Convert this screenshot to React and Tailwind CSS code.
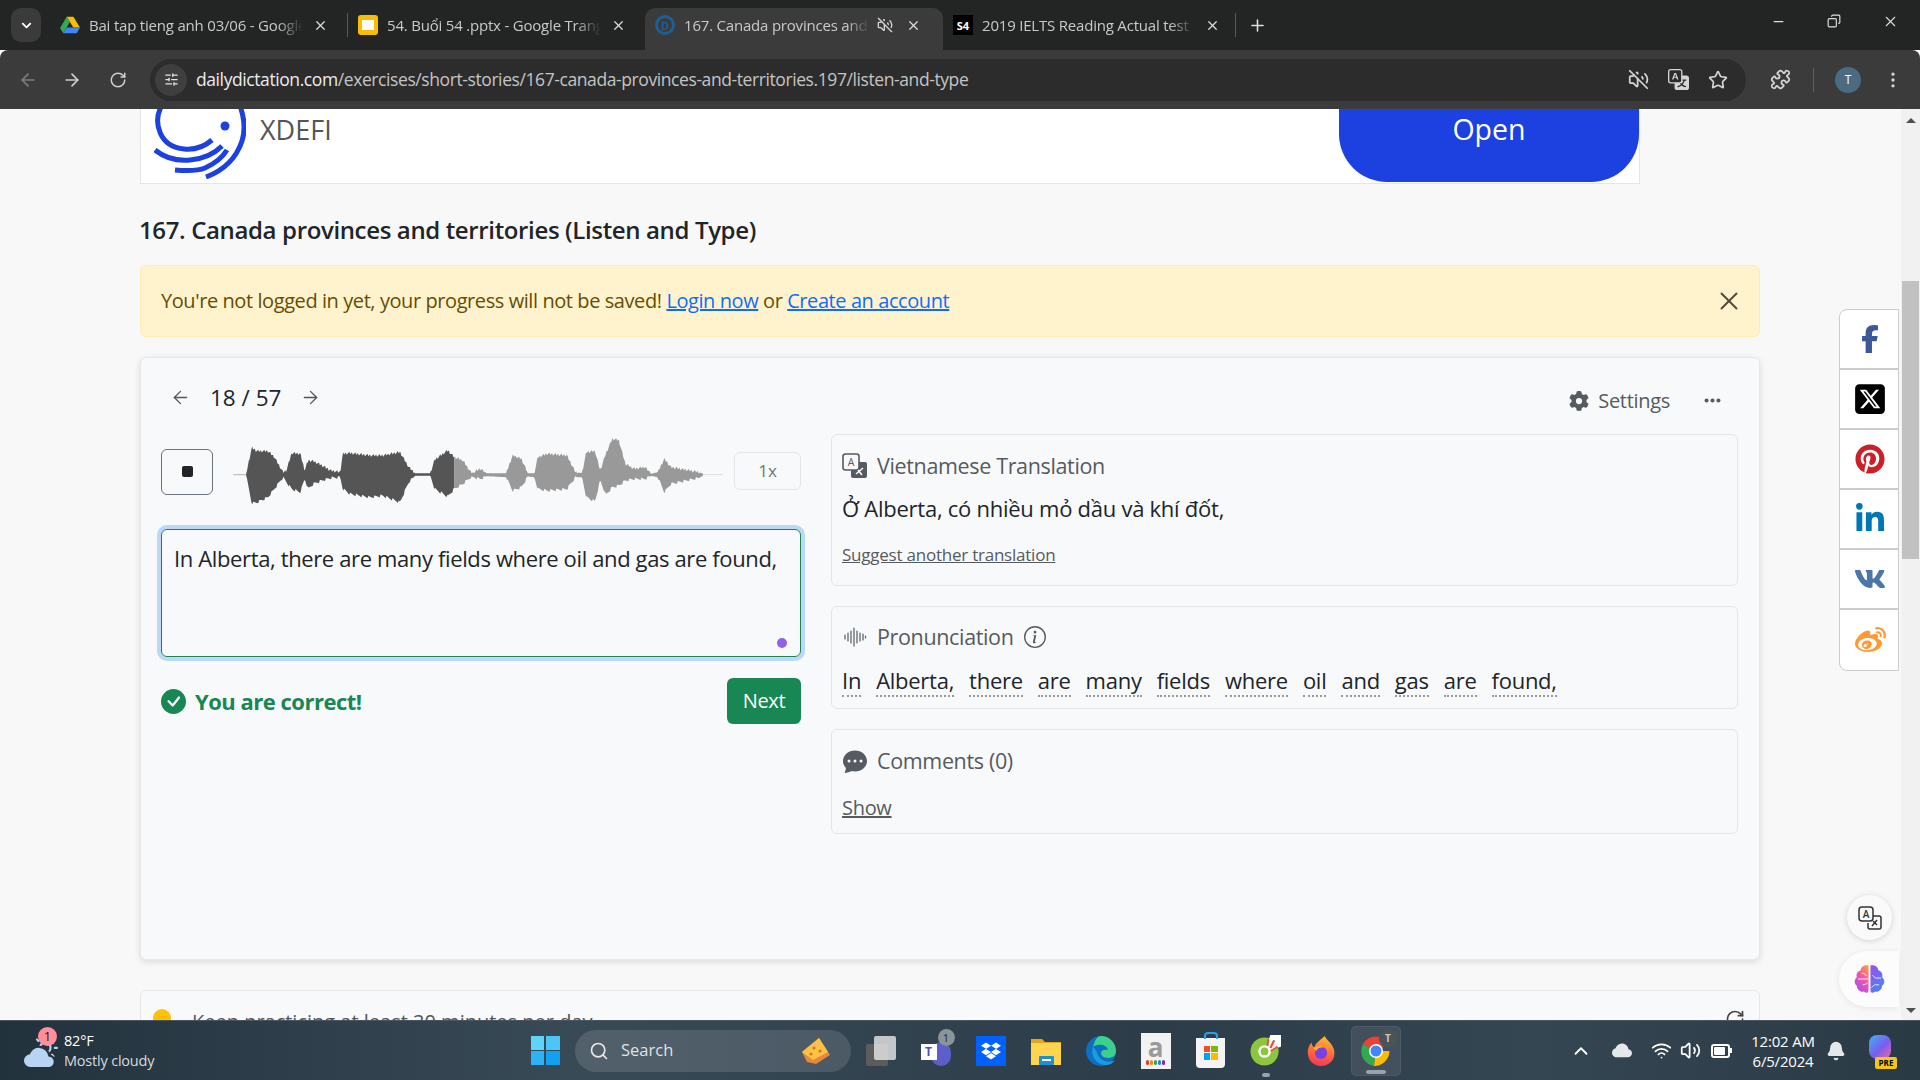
import { ArrowLeft, ArrowRight, RotateCw, X, Plus, Minus, Search, Star, VolumeOff, Puzzle, EllipsisVertical, ChevronDown, ChevronUp, Wifi, Volume2, Bell, SlidersHorizontal, Copy, RotateCcw } from 'lucide-react';
import { FaFacebookF, FaPinterest, FaLinkedinIn, FaWeibo, FaSquareXTwitter, FaGear, FaEllipsis, FaDropbox } from 'react-icons/fa6';
import { FaVk } from 'react-icons/fa';
import { BsCheckCircleFill, BsChatDotsFill, BsInfoCircle, BsCloudFill, BsCloudSunFill, BsTranslate } from 'react-icons/bs';

const font = "font-['Open_Sans','Noto_Sans',sans-serif]";

// zoom-space envelope of the waveform: x, top, bottom
const envelope = [
  [245, 300, 306], [258, 222, 388], [270, 232, 385], [295, 232, 370], [310, 250, 345], [330, 295, 310], [338, 290, 325],
  [350, 238, 345], [370, 240, 355], [380, 290, 315], [388, 260, 345], [400, 262, 330], [420, 275, 320], [440, 290, 312],
  [462, 295, 310], [468, 240, 345], [485, 238, 360], [530, 245, 370], [560, 245, 365], [600, 235, 385], [620, 280, 325],
  [635, 298, 306], [670, 298, 306], [680, 258, 345], [710, 230, 368], [725, 250, 345], [745, 260, 330], [765, 298, 308],
  [785, 285, 315], [800, 298, 307], [845, 298, 310], [860, 245, 350], [880, 255, 340], [895, 298, 308], [910, 298, 310],
  [918, 250, 345], [940, 240, 350], [985, 245, 345], [1005, 295, 310], [1020, 298, 310], [1030, 235, 370], [1050, 232, 382],
  [1062, 290, 320], [1075, 240, 362], [1090, 195, 340], [1105, 200, 335], [1120, 270, 320], [1140, 285, 315], [1165, 280, 315],
  [1180, 300, 306], [1195, 295, 310], [1210, 255, 355], [1225, 280, 330], [1260, 288, 320], [1290, 295, 312], [1300, 300, 305],
];

function wavePoints(from, to) {
  const top = [];
  const bottom = [];
  for (let x = from; x <= to; x += 2) {
    const i = envelope.findIndex((p) => p[0] >= x);
    const b = envelope[i] || envelope[envelope.length - 1];
    const a = envelope[Math.max(i - 1, 0)];
    const f = b[0] === a[0] ? 0 : (x - a[0]) / (b[0] - a[0]);
    const t = a[1] + (b[1] - a[1]) * f;
    const d = a[2] + (b[2] - a[2]) * f;
    const big = d - t > 14;
    top.push(`${x},${t + (big ? (((x * 13) % 7) - 3) * 1.4 : 0)}`);
    bottom.unshift(`${x},${d - (big ? (((x * 17) % 7) - 3) * 1.4 : 0)}`);
  }
  return [...top, ...bottom].join(' ');
}

function Waveform() {
  return (
    <svg viewBox="210 190 1140 200" preserveAspectRatio="none" className="w-[494px] h-[67px] shrink-0">
      <rect x="215" y="301" width="510" height="3" fill="#b5b5b5" />
      <rect x="725" y="301" width="620" height="3" fill="#dddddd" />
      <polygon points={wavePoints(245, 725)} fill="#555555" />
      <polygon points={wavePoints(725, 1300)} fill="#999999" />
    </svg>
  );
}

function DriveIcon() {
  return (
    <svg viewBox="0 0 24 22" className="w-5 h-5 shrink-0">
      <path d="M8 1h8l8 13h-8z" fill="#fbbc04" />
      <path d="M8 1 0 15l4 6 8-14z" fill="#34a853" />
      <path d="M4 21h16l4-7H8z" fill="#4285f4" />
    </svg>
  );
}

function TabFrame({ icon, title, active, extra, width, pad, sep = true }) {
  return (
    <div className="flex items-center">
      <div className={`flex items-center h-[42px] ${width} pl-[10px] ${pad} pb-[8px] ${active ? 'bg-[#3b3b3b] rounded-t-[10px]' : ''}`}>
        {icon}
        <span className="ml-[9px] flex-1 min-w-0 overflow-hidden whitespace-nowrap text-[15px] tracking-[-0.2px] text-[#c9c9c9] [mask-image:linear-gradient(to_right,black_88%,transparent)]">{title}</span>
        {extra}
        <X size={15} className="ml-[10px] text-[#dcdcdc] shrink-0" />
      </div>
      {sep && <div className="w-px h-[24px] mb-[8px] bg-[#5a5a5a]" />}
    </div>
  );
}

function TabStrip() {
  return (
    <div className="h-[50px] bg-[#232525] flex items-end shrink-0 pl-[11px]">
      <div className="w-[30px] h-[34px] bg-[#3b3b3b] rounded-[10px] flex items-center justify-center mb-[8px]">
        <ChevronDown size={15} className="text-white" strokeWidth={3} />
      </div>
      <div className="ml-[9px] flex items-center">
        <TabFrame width="w-[297px]" pad="pr-[19px]" title="Bai tap tieng anh 03/06 - Google Drive" icon={<DriveIcon />} />
        <TabFrame width="w-[297px]" pad="pr-[19px]" sep={false} title="54. Buổi 54 .pptx - Google Trang tính" icon={
          <div className="w-5 h-5 rounded-[3px] bg-[#fbbc04] flex items-center justify-center shrink-0"><div className="w-3 h-[10px] bg-white" /></div>
        } />
        <TabFrame width="w-[298px]" pad="pr-[22px]" active sep={false} title="167. Canada provinces and territories" extra={<VolumeOff size={16} className="ml-[8px] mr-[3px] text-[#d5d5d5] shrink-0" />} icon={
          <div className="w-5 h-5 rounded-full border-[3px] border-[#1c5f96] flex items-center justify-center text-[11px] font-bold text-[#1c5f96] leading-none shrink-0">D</div>
        } />
        <TabFrame width="w-[292px]" pad="pr-[15px]" title="2019 IELTS Reading Actual test 3" icon={
          <div className="w-5 h-5 bg-black flex items-center justify-center text-[11px] font-bold text-white leading-none shrink-0">S4</div>
        } />
        <Plus size={19} className="ml-[12px] mb-[8px] text-[#e0e0e0]" />
      </div>
      <div className="ml-auto flex items-center h-[42px] mb-[8px] pr-[21px] gap-[41px] text-[#dedede]">
        <Minus size={15} />
        <Copy size={14} className="-scale-x-100" />
        <X size={17} strokeWidth={1.5} />
      </div>
    </div>
  );
}

function Toolbar() {
  return (
    <div className="h-[59px] bg-[#3b3b3b] flex items-center shrink-0 rounded-t-[8px] pl-[18px] pr-[17px]">
      <ArrowLeft size={20} className="text-[#7d7d7d]" />
      <ArrowRight size={20} className="ml-[24px] text-[#cfcfcf]" />
      <RotateCw size={18} className="ml-[27px] text-[#cfcfcf]" />
      <div className="ml-[23px] flex-1 h-[42px] bg-[#2c2c2c] rounded-full flex items-center pl-[5px] pr-[18px]">
        <div className="w-8 h-8 rounded-full bg-[#3f3f3f] flex items-center justify-center">
          <SlidersHorizontal size={15} className="text-[#e3e3e3]" />
        </div>
        <div className="ml-[9px] text-[17.5px] tracking-[-0.41px] whitespace-nowrap text-[#c4c4c4]">
          <span className="text-[#ececec]">dailydictation.com</span>/exercises/short-stories/167-canada-provinces-and-territories.197/listen-and-type
        </div>
        <div className="ml-auto flex items-center gap-[19px] text-[#d5d5d5]">
          <VolumeOff size={21} />
          <BsTranslate size={21} />
          <Star size={20} />
        </div>
      </div>
      <Puzzle size={21} className="ml-[24px] text-[#d5d5d5]" />
      <div className="ml-[22px] w-px h-[24px] bg-[#5f5f5f]" />
      <div className="ml-[21px] w-[26px] h-[26px] rounded-full bg-[#4b6b82] text-white text-[12px] flex items-center justify-center">T</div>
      <EllipsisVertical size={20} className="ml-[22px] text-[#d5d5d5]" />
    </div>
  );
}

function AdLogo() {
  return (
    <svg viewBox="0 0 92 92" className="w-[92px] h-[92px] shrink-0 -mt-[22px]" fill="none" stroke="#1d40e0" strokeWidth="5" strokeLinecap="butt">
      <path d="M8 18C-2 36 6 60 30 62 40 63 50 60 58 53" />
      <path d="M1 63C12 72 24 74 36 73 48 72 60 67 68 59" />
      <path d="M21 83C34 84 44 84 51 81 60 77 68 71 73 63" />
      <path d="M83 12C90 26 92 42 88 54 82 72 68 84 52 90" />
      <circle cx="71" cy="39" r="4.500" fill="#1d40e0" stroke="none" />
    </svg>
  );
}

function Ad() {
  return (
    <div className="w-[1500px] h-[75px] bg-white border border-t-0 border-[#e5e5e5] flex items-start pl-[13px] overflow-hidden">
      <AdLogo />
      <span className="ml-[14px] mt-[3px] text-[27px] leading-[36px] text-[#555]">XDEFI</span>
      <div className="ml-auto w-[300px] h-[73px] bg-[#1d40e0] rounded-b-[48px] flex items-center justify-center text-white text-[28.5px] font-medium pb-[32px]">Open</div>
    </div>
  );
}

function SectionTitle({ icon, children, extra }) {
  return (
    <div className="flex items-center text-[#555b61] text-[21.5px] leading-[30px] tracking-[-0.35px]">
      <span className="w-[27px] flex justify-center shrink-0 -ml-[1px]">{icon}</span>
      <span className="ml-[9px]">{children}</span>
      {extra}
    </div>
  );
}

function TranslateIcon() {
  return (
    <svg viewBox="0 0 26 26" className="w-[26px] h-[26px]">
      <rect x="9" y="9" width="16" height="16" rx="2" fill="#555b61" />
      <rect x="1" y="1" width="16" height="16" rx="2.5" fill="#f8f9fa" stroke="#555b61" strokeWidth="1.6" />
      <text x="9" y="13" textAnchor="middle" fontSize="10.5" fontFamily="Open Sans" fill="#555b61">A</text>
      <path d="M14 21l7-6M16 17l4 5" stroke="#f8f9fa" strokeWidth="1.6" />
    </svg>
  );
}

function SoundIcon() {
  return (
    <svg viewBox="0 0 24 24" className="w-6 h-6" stroke="#555b61" strokeWidth="1.2" strokeLinecap="round">
      <path d="M2 10v4M5 8v8M8 6v12M11 3v18M14 6v12M17 8v8M20 9v6M22.5 11v2" />
    </svg>
  );
}

const words = ['In', 'Alberta,', 'there', 'are', 'many', 'fields', 'where', 'oil', 'and', 'gas', 'are', 'found,'];

function RightPanels() {
  return (
    <div className="w-[908px] flex flex-col gap-[20px]">
      <div className="h-[152px] border border-[#e3e6e9] rounded-[6px] pl-[10px] pt-[16px]">
        <SectionTitle icon={<TranslateIcon />}>Vietnamese Translation</SectionTitle>
        <div className="mt-[12px] text-[22px] leading-[30px] tracking-[-0.26px] text-[#212529]">Ở Alberta, có nhiều mỏ dầu và khí đốt,</div>
        <a className="block mt-[20px] text-[17px] leading-[24px] tracking-[-0.23px] text-[#555b61] underline">Suggest another translation</a>
      </div>
      <div className="h-[103px] border border-[#e3e6e9] rounded-[6px] pl-[10px] pt-[15px]">
        <SectionTitle icon={<SoundIcon />} extra={<BsInfoCircle size={22} className="ml-[10px]" />}>Pronunciation</SectionTitle>
        <div className="mt-[13px] flex gap-[15px] text-[22px] leading-[30px] tracking-[-0.26px] text-[#212529]">
          {words.map((w, i) => (
            <span key={i} className="border-b-2 border-dotted border-[#999]">{w}</span>
          ))}
        </div>
      </div>
      <div className="h-[105px] border border-[#e3e6e9] rounded-[6px] pl-[10px] pt-[16px]">
        <SectionTitle icon={<BsChatDotsFill size={24} />}>Comments (0)</SectionTitle>
        <a className="block mt-[18px] text-[20px] leading-[28px] tracking-[-0.3px] text-[#555b61] underline">Show</a>
      </div>
    </div>
  );
}

function PlayerCard() {
  return (
    <div className="w-[1620px] h-[603px] mt-[20px] bg-[#f8f9fa] border border-[#e6e7e9] rounded-[6px] shadow-[0_2px_6px_rgba(0,0,0,0.12)] pl-[20px] pr-[21px]">
      <div className="h-[76px] flex items-center">
        <div className="flex items-center pl-[9px] pt-[3px] text-[#212529]">
          <ArrowLeft size={21} strokeWidth={1.5} className="text-[#555]" />
          <span className="ml-[19px] text-[22.5px]">18 / 57</span>
          <ArrowRight size={21} strokeWidth={1.5} className="ml-[19px] text-[#555]" />
        </div>
        <div className="ml-auto flex items-center pt-[9px] text-[#555b61]">
          <FaGear size={20} />
          <span className="ml-[9px] text-[20px] tracking-[-0.3px]">Settings</span>
          <FaEllipsis size={19} className="ml-[33px] mr-[16px]" />
        </div>
      </div>
      <div className="flex gap-[30px]">
        <div className="w-[640px] shrink-0">
          <div className="flex items-center h-[67px] mt-[3px]">
            <div className="w-[52px] h-[46px] mt-[2px] border border-[#6c757d] rounded-[6px] flex items-center justify-center shrink-0">
              <div className="w-[11px] h-[11px] rounded-[2px] bg-[#212529]" />
            </div>
            <div className="ml-[18px]"><Waveform /></div>
            <div className="ml-[9px] w-[68px] h-[38px] mt-[1px] border border-[#e3e6e9] rounded-[6px] flex items-center justify-center text-[17px] text-[#6c757d]">1x</div>
          </div>
          <div className="relative mt-[25px] h-[128px] border border-[#198754] rounded-[6px] ring-4 ring-[#bcd7f9] pl-[12px] pt-[13px] text-[22px] leading-[30px] tracking-[-0.37px] text-[#212529] whitespace-nowrap">
            In Alberta, there are many fields where oil and gas are found,
            <div className="absolute right-[13px] bottom-[8px] w-[10px] h-[10px] rounded-full bg-[#9060e8]" />
          </div>
          <div className="mt-[21px] flex items-center justify-between">
            <div className="flex items-center text-[#198754]">
              <BsCheckCircleFill size={25} />
              <span className="ml-[9px] text-[22px] font-bold tracking-[-0.5px]">You are correct!</span>
            </div>
            <div className="w-[74px] h-[46px] bg-[#198754] rounded-[6px] flex items-center justify-center text-white text-[20px] tracking-[-0.3px]">Next</div>
          </div>
        </div>
        <RightPanels />
      </div>
    </div>
  );
}

function ShareBar() {
  const items = [
    <FaFacebookF size={28} className="text-[#3b5998]" />,
    <FaSquareXTwitter size={34} className="text-black" />,
    <FaPinterest size={30} className="text-[#cb2027]" />,
    <FaLinkedinIn size={32} className="text-[#0077b5]" />,
    <FaVk size={32} className="text-[#4a76a8]" />,
    <FaWeibo size={31} className="text-[#ff9933]" />,
  ];
  return (
    <div className="absolute right-[21px] top-[200px] w-[60px] bg-white border border-[#ccc] rounded-l-[8px] flex flex-col divide-y-2 divide-[#ccc]">
      {items.map((icon, i) => (
        <div key={i} className="h-[60px] pl-[2px] flex items-center justify-center">{icon}</div>
      ))}
    </div>
  );
}

function FloatButtons() {
  return (
    <div className="absolute right-[21px] top-[786px] w-[60px] flex flex-col items-center gap-[11px]">
      <div className="w-[45px] h-[45px] ml-[1px] rounded-full bg-[#fafafa] shadow-[0_1px_6px_rgba(0,0,0,0.15)] flex items-center justify-center">
        <svg viewBox="0 0 24 24" className="w-[24px] h-[24px]" fill="none" stroke="#333" strokeWidth="1.5">
          <rect x="1" y="1" width="14" height="14" rx="3" fill="#fafafa" />
          <text x="8" y="12" textAnchor="middle" fontSize="10" fontFamily="Open Sans" fontWeight="600" fill="#333" stroke="none">A</text>
          <path d="M15 10h6a2 2 0 0 1 2 2v9a2 2 0 0 1-2 2h-9a2 2 0 0 1-2-2v-4" />
          <path d="M14 20l5-6M15 15l4 4" />
        </svg>
      </div>
      <div className="w-[60px] h-[56px] rounded-l-[28px] bg-[#fcfcfc] shadow-[0_1px_6px_rgba(0,0,0,0.08)] flex items-center justify-center">
        <svg viewBox="0 0 32 30" className="w-[31px] h-[30px]">
          <defs>
            <linearGradient id="brainLeft" x1="0.8" y1="0" x2="0.2" y2="1">
              <stop offset="0" stopColor="#ff9a3c" />
              <stop offset="0.45" stopColor="#ee55b0" />
              <stop offset="1" stopColor="#a64ff0" />
            </linearGradient>
            <linearGradient id="brainRight" x1="0.2" y1="0" x2="0.8" y2="1">
              <stop offset="0" stopColor="#9a4ff0" />
              <stop offset="1" stopColor="#3f8cf5" />
            </linearGradient>
          </defs>
          <path d="M15 1C10 0 7 3 7 6 3 7 2 11 3 13c-3 3-3 7 0 9 0 4 4 7 7 6 2 2 5 1 5-1z" fill="url(#brainLeft)" />
          <path d="M17 1c5-1 8 2 8 5 4 1 5 5 4 7 3 3 3 7 0 9 0 4-4 7-7 6-2 2-5 1-5-1z" fill="url(#brainRight)" />
          <path d="M4 15h11M8 9c2 0 4 1 5 3M9 21c2 0 4-1 5-2M28 14h-6l-3-3M26 21h-5l-3 3" stroke="#f5e8ff" strokeWidth="1" fill="none" />
        </svg>
      </div>
    </div>
  );
}

function Scrollbar() {
  return (
    <div className="w-[19px] bg-[#f1f1f1] flex flex-col items-center shrink-0">
      <div className="mt-[9px] w-0 h-0 border-x-[5px] border-x-transparent border-b-[5px] border-b-[#505050]" />
      <div className="mt-[158px] w-[17px] h-[278px] bg-[#c1c1c1]" />
      <div className="mt-auto mb-[7px] w-0 h-0 border-x-[5px] border-x-transparent border-t-[5px] border-t-[#505050]" />
    </div>
  );
}

function Page() {
  return (
    <div className="relative flex-1 flex min-h-0 overflow-hidden">
      <div className="flex-1 min-w-0 bg-[#f8f8f8] pl-[140px]">
        <Ad />
        <h1 className="mt-[29px] -ml-[1px] text-[24px] leading-[34px] font-semibold tracking-[-0.36px] text-[#212529]">167. Canada provinces and territories (Listen and Type)</h1>
        <div className="mt-[18px] w-[1620px] h-[72px] bg-[#fff3cd] border border-[#ffecb5] rounded-[6px] flex items-center pl-[20px] pr-[15px] text-[20px] tracking-[-0.42px] text-[#664d03]">
          <span>
            You're not logged in yet, your progress will not be saved! <a className="text-[#0d6efd] underline">Login now</a> or <a className="text-[#0d6efd] underline">Create an account</a>
          </span>
          <X size={30} strokeWidth={1.5} className="ml-auto text-[#55483a]" />
        </div>
        <PlayerCard />
        <div className="mt-[30px] w-[1620px] h-[60px] bg-[#f8f9fa] border border-[#e6e7e9] rounded-[6px] flex items-start pl-[12px] pr-[14px] pt-[18px]">
          <div className="w-[18px] h-[18px] rounded-full bg-[#ffc107]" />
          <span className="ml-[21px] -mt-[2px] text-[20px] text-[#555]">Keep practicing at least 30 minutes per day</span>
          <RotateCcw size={20} className="ml-auto text-[#444] -scale-x-100" />
        </div>
      </div>
      <Scrollbar />
      <ShareBar />
      <FloatButtons />
    </div>
  );
}

function WinLogo() {
  return (
    <div className="grid grid-cols-2 gap-[1.5px] w-[29px] h-[29px]">
      <div className="bg-[#5fd3fa]" /><div className="bg-[#4cc5f8]" />
      <div className="bg-[#2bb3f6]" /><div className="bg-[#14a0f0]" />
    </div>
  );
}

function ChromeIcon() {
  return (
    <svg viewBox="0 0 32 32" className="w-[32px] h-[32px]">
      <path d="M16 16 3 9a15 15 0 0 1 26 0z" fill="#ea4335" />
      <path d="M16 16 3 9a15 15 0 0 0 11 22z" fill="#34a853" />
      <path d="M16 16h13.500a15 15 0 0 1-15.500 15z" fill="#fbbc04" />
      <circle cx="16" cy="16" r="7" fill="#fff" />
      <circle cx="16" cy="16" r="5.500" fill="#4285f4" />
    </svg>
  );
}

function TaskIcons() {
  return (
    <div className="flex items-center">
      <div className="w-[55px] flex justify-center">
        <div className="relative w-[30px] h-[30px]">
          <div className="absolute left-0 bottom-0 w-[22px] h-[22px] bg-[#5c5c5c] rounded-[2px]" />
          <div className="absolute right-0 top-0 w-[22px] h-[24px] bg-[#e8e8e8]/80 rounded-[2px]" />
        </div>
      </div>
      <div className="w-[55px] flex justify-center">
        <div className="relative w-[30px] h-[30px]">
          <div className="absolute right-0 top-[6px] w-[20px] h-[24px] bg-[#5b5fc7] rounded-full" />
          <div className="absolute left-0 top-[8px] w-[16px] h-[16px] bg-white text-[#4b53bc] text-[12px] font-bold flex items-center justify-center leading-none">T</div>
          <div className="absolute -right-[4px] -top-[7px] w-[17px] h-[17px] rounded-full bg-[#8a9499] text-[#1c2a33] text-[11px] flex items-center justify-center leading-none">1</div>
        </div>
      </div>
      <div className="w-[55px] flex justify-center">
        <div className="w-[30px] h-[30px] bg-[#0061fe] flex items-center justify-center"><FaDropbox size={20} className="text-white" /></div>
      </div>
      <div className="w-[55px] flex justify-center">
        <svg viewBox="0 0 32 30" className="w-[32px] h-[30px]">
          <path d="M1 3h11l3 3h16v22H1z" fill="#e3a51a" />
          <rect x="1" y="7" width="30" height="22" fill="#ffd54f" />
          <rect x="9" y="20" width="15" height="9" rx="1" fill="#1c8fd6" />
          <rect x="12" y="23" width="9" height="2" fill="#fff" />
        </svg>
      </div>
      <div className="w-[55px] flex justify-center">
        <svg viewBox="0 0 32 32" className="w-[32px] h-[32px]">
          <circle cx="16" cy="16" r="15" fill="#0c6fc4" />
          <path d="M16 1a15 15 0 0 1 15 15c0 5-4 7-8 7-5 0-7-3-7-5 0-3 4-4 7-3-1-5-10-7-15-3C10 4 13 1 16 1z" fill="#3bd18c" />
          <path d="M8 12c-3 8 3 18 13 18 4 0 7-2 9-5-5 3-12 2-16-3-2-3-2-7-6-10z" fill="#1a9de0" />
        </svg>
      </div>
      <div className="w-[55px] flex justify-center">
        <div className="w-[30px] h-[36px] bg-[#f2f2f2] flex flex-col items-center justify-end pb-[4px]">
          <span className="text-[26px] leading-[24px] text-[#9a9a9a] font-bold">a</span>
          <div className="flex gap-[1px] mt-[1px]">
            <div className="w-[3px] h-[5px] rounded-full bg-[#e53935]" /><div className="w-[3px] h-[5px] rounded-full bg-[#fb8c00]" /><div className="w-[3px] h-[5px] rounded-full bg-[#43a047]" /><div className="w-[3px] h-[5px] rounded-full bg-[#1e88e5]" /><div className="w-[3px] h-[5px] rounded-full bg-[#8e24aa]" />
          </div>
        </div>
      </div>
      <div className="w-[55px] flex justify-center">
        <div className="relative w-[29px] h-[30px] mt-[4px] bg-[#f4f4f4] rounded-b-[4px] flex items-center justify-center">
          <div className="absolute -top-[6px] w-[14px] h-[7px] border-2 border-b-0 border-[#2b9fe0] rounded-t-[4px]" />
          <div className="grid grid-cols-2 gap-[1px] w-[14px] h-[14px]">
            <div className="bg-[#f25022]" /><div className="bg-[#7fba00]" /><div className="bg-[#00a4ef]" /><div className="bg-[#ffb900]" />
          </div>
        </div>
      </div>
      <div className="w-[55px] flex flex-col items-center relative">
        <svg viewBox="0 0 32 32" className="w-[31px] h-[31px]">
          <circle cx="15" cy="17" r="14.500" fill="#8cc63f" />
          <path d="M15 17 21 0h11v12z" fill="#fff" />
          <circle cx="15" cy="17" r="6.500" fill="#fff" />
          <circle cx="15" cy="17" r="4" fill="#8cc63f" />
          <path d="M17 11l1-7 2 .5-1 7zM20 13l4-8 2 1-4 8zM21 16l7-5 1 2-7 4z" fill="#e8503a" />
        </svg>
        <div className="absolute -bottom-[11px] w-[8px] h-[4px] rounded-full bg-[#9aa3a9]" />
      </div>
      <div className="w-[55px] flex justify-center">
        <svg viewBox="0 0 32 34" className="w-[30px] h-[32px]">
          <defs>
            <linearGradient id="foxBody" x1="0.6" y1="0" x2="0.4" y2="1">
              <stop offset="0" stopColor="#ffbd2e" />
              <stop offset="0.5" stopColor="#ff7139" />
              <stop offset="1" stopColor="#f5365c" />
            </linearGradient>
          </defs>
          <path d="M20 1c1 4 8 7 10 15 2 10-5 17-14 17S1 26 2 16c1-4 2-6 4-8 0 3 1 4 3 5 1-4 5-7 11-12z" fill="url(#foxBody)" />
          <circle cx="16" cy="19" r="6.500" fill="#7542e5" />
          <path d="M8 14c3-3 8-3 11-1-4 0-7 1-8 4z" fill="#ffb02e" />
        </svg>
      </div>
      <div className="relative w-[50px] h-[50px] mx-[2.5px] bg-[#ffffff14] border border-[#ffffff10] rounded-[5px] flex items-center justify-center">
        <ChromeIcon />
        <div className="absolute right-[2px] top-[2px] w-[19px] h-[19px] rounded-full bg-[#4a5358] text-[#c8c8c8] text-[10px] font-bold flex items-center justify-center leading-none">T</div>
        <div className="absolute bottom-[1px] w-[20px] h-[4px] rounded-full bg-[#9aa3a9]" />
      </div>
    </div>
  );
}

function Taskbar() {
  return (
    <div className="h-[60px] shrink-0 bg-[linear-gradient(90deg,#22323d_0%,#394a57_30%,#2c3d49_60%,#354653_80%,#2a3a45_100%)] border-t border-[#4a5560] flex items-center text-white">
      <div className="w-[515px] shrink-0 flex items-center pl-[24px]">
        <div className="relative w-[36px] h-[36px]">
          <BsCloudSunFill size={34} className="text-[#b9d3f2]" />
          <div className="absolute left-[14px] -top-[6px] w-[19px] h-[19px] rounded-full bg-[#ff8f9b] text-[#3a1015] text-[13px] flex items-center justify-center leading-none">1</div>
        </div>
        <div className="ml-[4px] text-[14.5px] leading-[20px] tracking-[-0.2px]">
          <div>82°F</div>
          <div className="text-[#d6dbdf]">Mostly cloudy</div>
        </div>
      </div>
      <div className="w-[56px] ml-[2px] flex justify-center"><WinLogo /></div>
      <div className="w-[276px] ml-[2px] h-[42px] rounded-full bg-[#ffffff1f] flex items-center pl-[14px] pr-[18px]">
        <Search size={20} className="text-[#e8e8e8]" />
        <span className="ml-[12px] text-[16.5px] text-[#dfe3e6]">Search</span>
        <svg viewBox="0 0 34 30" className="ml-auto w-[34px] h-[30px]">
          <path d="M3 16 20 2l11 17-14 9-9-2z" fill="#e8883a" />
          <path d="M3 16 20 2l9 14-15 8z" fill="#fbc246" />
          <circle cx="15" cy="12" r="1.500" fill="#c97a1f" /><circle cx="21" cy="15" r="1.500" fill="#c97a1f" /><circle cx="12" cy="18" r="1.500" fill="#c97a1f" />
        </svg>
      </div>
      <div className="ml-[2px]"><TaskIcons /></div>
      <div className="ml-auto flex items-center pr-[25px]">
        <ChevronUp size={22} />
        <BsCloudFill size={20} className="ml-[20px] text-[#e4e8ea]" />
        <Wifi size={21} className="ml-[19px]" />
        <Volume2 size={21} className="ml-[8px]" />
        <div className="ml-[10px] flex items-center">
          <div className="w-[19px] h-[14px] border-2 border-white rounded-[3px] p-[1px]"><div className="w-[11px] h-full bg-white rounded-[1px]" /></div>
          <div className="w-[2px] h-[5px] bg-white" />
        </div>
        <div className="ml-[10px] w-[82px] text-center text-[15px] leading-[20px] tracking-[-0.2px]">
          <div>12:02 AM</div>
          <div>6/5/2024</div>
        </div>
        <Bell size={20} fill="#e4e8ea" className="ml-[2px] text-[#e4e8ea]" />
        <div className="relative ml-[19px] w-[30px] h-[32px]">
          <div className="absolute left-[4px] top-0 w-[22px] h-[24px] rounded-[8px] bg-[linear-gradient(135deg,#3bb5f0,#7b5cf0_55%,#f06aa0)]" />
          <div className="absolute right-[-2px] bottom-[-2px] w-[22px] h-[12px] rounded-[2px] bg-[#f5c518] text-black text-[8px] font-bold flex items-center justify-center leading-none">PRE</div>
        </div>
      </div>
    </div>
  );
}

export default function App() {
  return (
    <div className={`h-screen w-[1920px] flex flex-col overflow-hidden ${font}`}>
      <TabStrip />
      <Toolbar />
      <Page />
      <Taskbar />
    </div>
  );
}
